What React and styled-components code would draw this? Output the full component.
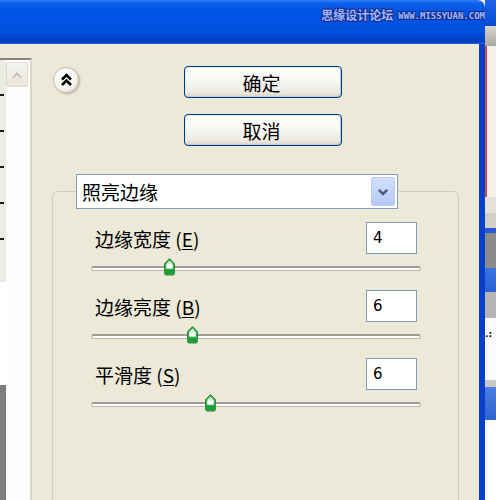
import React from "react";
import styled, { createGlobalStyle } from "styled-components";

const GlobalStyle = createGlobalStyle`
  html, body {
    margin: 0;
    padding: 0;
    background: #ece9d8;
  }
  body {
    font-family: "Noto Sans CJK SC", "Noto Sans", sans-serif;
    color: #000;
  }
`;

const fields = [
  { label: "边缘宽度", key: "E", value: 4, min: 1, max: 14 },
  { label: "边缘亮度", key: "B", value: 6, min: 0, max: 20 },
  { label: "平滑度", key: "S", value: 6, min: 1, max: 15 },
];

const sideBlocks = [
  { h: 26, bg: "linear-gradient(180deg,#1d63ea,#0a4bd6)" },
  { h: 20, bg: "linear-gradient(180deg,#d6d4cb,#a9a8a2)" },
  { h: 151, bg: "#f3f1e8", accent: true },
  { h: 16, bg: "#e4e2d8" },
  { h: 15, bg: "#d2d0c6" },
  { h: 5, bg: "#2458d8" },
  { h: 35, bg: "#8b8b8b" },
  { h: 24, bg: "linear-gradient(180deg,#3c74e0,#2a60d6)" },
  { h: 26, bg: "#b5b5b3" },
  { h: 62, bg: "#fafafa", text: ".:" },
  { h: 7, bg: "#c9c9c6" },
  { h: 33, bg: "linear-gradient(180deg,#4b7fe0,#2d62d4)" },
  { h: 80, bg: "#fff" },
];

const Page = styled.div`
  display: flex;
  width: 496px;
  height: 500px;
  overflow: hidden;
`;

const Window = styled.div`
  flex: 0 0 485px;
  display: flex;
  flex-direction: column;
`;

const TitleBar = styled.div`
  flex: 0 0 44px;
  box-sizing: border-box;
  border-top-right-radius: 8px;
  background: linear-gradient(
    180deg,
    #2f7ef6 0px,
    #0b5ce9 4px,
    #0055e4 12px,
    #0052e0 30px,
    #0047d1 37px,
    #003dc0 42px,
    #2563d8 44px
  );
  display: flex;
  justify-content: flex-end;
  align-items: flex-start;
  gap: 5px;
  padding-top: 8px;
`;

const outline = `
  text-shadow:
    1px 0 #1b2f8f, -1px 0 #1b2f8f, 0 1px #1b2f8f, 0 -1px #1b2f8f,
    1px 1px #1b2f8f, -1px -1px #1b2f8f, 1px -1px #1b2f8f, -1px 1px #1b2f8f;
`;

const SiteName = styled.span`
  font-size: 12px;
  font-weight: bold;
  line-height: 14px;
  color: #9db7ff;
  ${outline}
`;

const SiteUrl = styled.span`
  font-family: "DejaVu Sans Mono", "Liberation Mono", monospace;
  font-weight: bold;
  font-size: 9px;
  line-height: 9px;
  margin-top: 4px;
  color: #9db7ff;
  ${outline}
`;

const Frame = styled.div`
  flex: 1;
  min-height: 0;
  display: flex;
  background: #ece9d8;
  border-right: 6px solid #0b44d6;
  border-image: linear-gradient(90deg, #002cae, #1659ea 50%, #0a3fcc) 1;
`;

const ListPane = styled.div`
  flex: 0 0 30px;
  margin-top: 14px;
  display: flex;
  background: #fff;
  border-top: 2px solid #85847b;
  border-right: 2px solid #d9d6c7;
`;

const ListColumn = styled.div`
  flex: 0 0 6px;
  display: flex;
  flex-direction: column;
  gap: 34px;
  padding-top: 34px;
  background: linear-gradient(
    180deg,
    #ecebe4 0 222px,
    #fff 222px 325px,
    #7d7d7b 325px
  );
`;

const Dash = styled.div`
  width: 4px;
  height: 2px;
  background: #1a1a1a;
`;

const ScrollColumn = styled.div`
  flex: 1;
  padding: 2px 2px 0 0;
  background: #fdfdfb;
`;

const ScrollUp = styled.div`
  height: 25px;
  box-sizing: border-box;
  border: 1px solid #dcdad0;
  border-radius: 2px;
  background: linear-gradient(180deg, #f6f5f0, #e7e5dc);
  display: flex;
  align-items: center;
  justify-content: center;
`;

const Content = styled.div`
  flex: 1;
  display: flex;
  flex-direction: column;
  padding-top: 22px;
`;

const TopRow = styled.div`
  display: flex;
  align-items: flex-start;
  padding-left: 21px;
`;

const CollapseButton = styled.div`
  width: 26px;
  height: 26px;
  margin-top: 1px;
  box-sizing: border-box;
  border-radius: 50%;
  border: 1px solid #c2bfb1;
  background: radial-gradient(circle at 40% 35%, #fff 0, #f6f5f0 55%, #dcd9cc 100%);
  box-shadow: 1px 1px 2px rgba(0, 0, 0, 0.25);
  display: flex;
  align-items: center;
  justify-content: center;
`;

const ButtonStack = styled.div`
  margin-left: 105px;
  display: flex;
  flex-direction: column;
  gap: 16px;
`;

const DialogButton = styled.div`
  width: 158px;
  height: 32px;
  box-sizing: border-box;
  border: 1px solid #003c74;
  border-radius: 4px;
  background: linear-gradient(180deg, #ffffff 0%, #f7f7f3 45%, #ebe9e1 85%, #d8d3c6 100%);
  box-shadow: inset -1px -1px 0 #b9c8ee, inset 1px 1px 0 #e4ecfd;
  display: flex;
  align-items: center;
  justify-content: center;
  font-size: 19px;
  line-height: 1;
  padding-right: 3px;
`;

const GroupBox = styled.fieldset`
  flex: 1;
  min-width: 0;
  width: 407px;
  box-sizing: border-box;
  margin: 28px 0 -10px 20px;
  padding: 0;
  border: 1px solid #d0cfbf;
  border-radius: 5px;
`;

const Legend = styled.legend`
  margin-left: 23px;
  padding: 0;
`;

const SelectBox = styled.div`
  width: 322px;
  height: 35px;
  box-sizing: border-box;
  border: 1px solid #7f9db9;
  background: #fff;
  display: flex;
  align-items: center;
  padding: 2px 2px 2px 5px;
  font-size: 19px;
`;

const SelectText = styled.span`
  flex: 1;
  line-height: 1;
`;

const DropButton = styled.div`
  width: 24px;
  height: 29px;
  box-sizing: border-box;
  border: 1px solid #bccbf3;
  border-radius: 2px;
  background: linear-gradient(180deg, #d2e0fd, #b6c9f7);
  display: flex;
  align-items: center;
  justify-content: center;
`;

const Fields = styled.div`
  padding: 13px 37px 0 38px;
  display: flex;
  flex-direction: column;
  gap: 14px;
`;

const FieldBlock = styled.div`
  display: flex;
  flex-direction: column;
  gap: 4px;
`;

const FieldRow = styled.div`
  height: 32px;
  display: flex;
  align-items: center;
  justify-content: space-between;
`;

const Label = styled.span`
  margin-left: 4px;
  font-size: 19px;
  line-height: 1;
  u {
    text-underline-offset: 2px;
  }
`;

const NumberBox = styled.div`
  width: 51px;
  height: 32px;
  margin-right: 4px;
  box-sizing: border-box;
  border: 1px solid #7f9db9;
  background: #fff;
  padding-left: 6px;
  display: flex;
  align-items: center;
  font-family: "DejaVu Sans", sans-serif;
  font-size: 15px;
`;

const Slider = styled.div`
  position: relative;
  height: 18px;
  padding-top: 8px;
  box-sizing: border-box;
`;

const Track = styled.div`
  height: 5px;
  box-sizing: border-box;
  border-radius: 3px;
  border: 1px solid #b9b7aa;
  border-top: 2px solid #9e9d92;
  background: #fdfdf9;
`;

const Thumb = styled.svg`
  position: absolute;
  top: 0;
`;

const SideWindow = styled.div`
  flex: 0 0 11px;
  display: flex;
  flex-direction: column;
`;

const SideBlock = styled.div`
  flex: 0 0 ${(p) => p.$h}px;
  background: ${(p) => p.$bg};
  border-left: ${(p) => (p.$accent ? "2px solid #c4524a" : "0")};
  font-family: "DejaVu Sans", sans-serif;
  font-size: 9px;
  font-weight: bold;
  line-height: 9px;
  padding-top: ${(p) => (p.$text ? 12 : 0)}px;
  box-sizing: border-box;
`;

const thumbLeft = (f) => 5 + ((f.value - f.min) / (f.max - f.min)) * 320 - 5.5;

function SliderThumb({ left }) {
  return (
    <Thumb width="11" height="18" viewBox="0 0 11 18" style={{ left }}>
      <path
        d="M5.5 0.6 L10.4 5.6 V15.4 Q10.4 17 8.8 17 H2.2 Q0.6 17 0.6 15.4 V5.6 Z"
        fill="#37ad4a"
        stroke="#27853a"
        strokeWidth="1"
      />
      <path d="M5.5 2.4 L8.6 5.6 V10.5 H2.4 V5.6 Z" fill="#c9efcf" />
      <rect x="2.4" y="6.5" width="6.2" height="4" fill="#ffffff" />
      <rect x="1.4" y="12" width="8.2" height="4" rx="1" fill="#1e9b3a" />
    </Thumb>
  );
}

export default function App() {
  return (
    <>
      <GlobalStyle />
      <Page>
        <Window>
          <TitleBar>
            <SiteName>思缘设计论坛</SiteName>
            <SiteUrl>WWW.MISSYUAN.COM</SiteUrl>
          </TitleBar>
          <Frame>
            <ListPane>
              <ListColumn>
                {[0, 1, 2, 3, 4].map((i) => (
                  <Dash key={i} />
                ))}
              </ListColumn>
              <ScrollColumn>
                <ScrollUp>
                  <svg width="12" height="8" viewBox="0 0 12 8">
                    <polyline points="2,6.5 6,2.5 10,6.5" fill="none" stroke="#c3c2bb" strokeWidth="2" />
                  </svg>
                </ScrollUp>
              </ScrollColumn>
            </ListPane>
            <Content>
              <TopRow>
                <CollapseButton>
                  <svg width="13" height="14" viewBox="0 0 13 14">
                    <polyline points="2,6.5 6.5,2 11,6.5" fill="none" stroke="#000" strokeWidth="2.5" />
                    <polyline points="2,12 6.5,7.5 11,12" fill="none" stroke="#000" strokeWidth="2.5" />
                  </svg>
                </CollapseButton>
                <ButtonStack>
                  <DialogButton>确定</DialogButton>
                  <DialogButton>取消</DialogButton>
                </ButtonStack>
              </TopRow>
              <GroupBox>
                <Legend>
                  <SelectBox>
                    <SelectText>照亮边缘</SelectText>
                    <DropButton>
                      <svg width="12" height="8" viewBox="0 0 12 8">
                        <polyline points="1.8,1.8 6,6 10.2,1.8" fill="none" stroke="#4a5d86" strokeWidth="2.6" />
                      </svg>
                    </DropButton>
                  </SelectBox>
                </Legend>
                <Fields>
                  {fields.map((f) => (
                    <FieldBlock key={f.key}>
                      <FieldRow>
                        <Label>
                          {f.label} (<u>{f.key}</u>)
                        </Label>
                        <NumberBox>{f.value}</NumberBox>
                      </FieldRow>
                      <Slider>
                        <Track />
                        <SliderThumb left={thumbLeft(f)} />
                      </Slider>
                    </FieldBlock>
                  ))}
                </Fields>
              </GroupBox>
            </Content>
          </Frame>
        </Window>
        <SideWindow>
          {sideBlocks.map((b, i) => (
            <SideBlock key={i} $h={b.h} $bg={b.bg} $accent={b.accent} $text={b.text}>
              {b.text}
            </SideBlock>
          ))}
        </SideWindow>
      </Page>
    </>
  );
}
